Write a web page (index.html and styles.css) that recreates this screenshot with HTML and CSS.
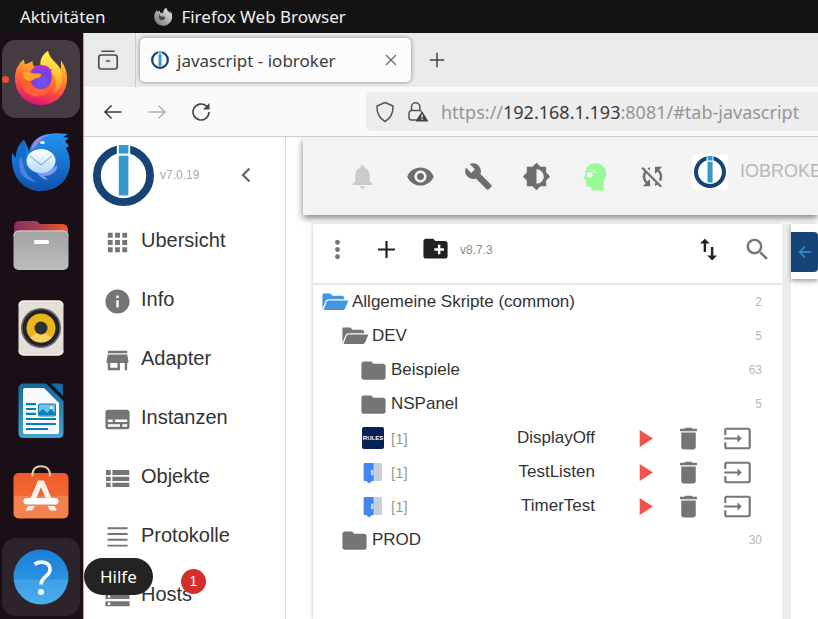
FILE: index.html
```html
<!DOCTYPE html>
<html lang="de">
<head>
<meta charset="utf-8">
<title>javascript - iobroker</title>
<link rel="stylesheet" href="styles.css">
</head>
<body>
<svg class="defs" aria-hidden="true">
  <defs>
    <linearGradient id="ffBody" x1="0.7" y1="0" x2="0.4" y2="1"><stop offset="0" stop-color="#ffe23a"/><stop offset="0.35" stop-color="#ffa02c"/><stop offset="0.65" stop-color="#ff5a36"/><stop offset="1" stop-color="#e0107c"/></linearGradient>
    <linearGradient id="ffFlame" x1="0" y1="0" x2="0" y2="1"><stop offset="0" stop-color="#fff252"/><stop offset="0.5" stop-color="#ffcf36"/><stop offset="1" stop-color="#ff7a2e"/></linearGradient>
    <radialGradient id="ffGlobe" cx="0.5" cy="0.7" r="0.7"><stop offset="0" stop-color="#6b57f5"/><stop offset="0.6" stop-color="#7a3fe0"/><stop offset="1" stop-color="#b833e1"/></radialGradient>
    <linearGradient id="tbBody" x1="0" y1="0" x2="0" y2="1"><stop offset="0" stop-color="#2394f3"/><stop offset="1" stop-color="#0d52ae"/></linearGradient>
    <linearGradient id="tbMail" x1="0" y1="0" x2="0" y2="1"><stop offset="0" stop-color="#ffffff"/><stop offset="1" stop-color="#b5dcfb"/></linearGradient>
    <linearGradient id="folderBack" x1="0" y1="0" x2="1" y2="0"><stop offset="0" stop-color="#84305a"/><stop offset="0.5" stop-color="#b5404a"/><stop offset="1" stop-color="#f15a24"/></linearGradient>
    <linearGradient id="folderFront" x1="0" y1="0" x2="0" y2="1"><stop offset="0" stop-color="#a3a3a3"/><stop offset="1" stop-color="#bcbcbc"/></linearGradient>
    <linearGradient id="writer" x1="0" y1="0" x2="0" y2="1"><stop offset="0" stop-color="#0f6a9e"/><stop offset="1" stop-color="#45a6d2"/></linearGradient>
    <linearGradient id="bag" x1="0" y1="0" x2="0" y2="1"><stop offset="0" stop-color="#f2592a"/><stop offset="1" stop-color="#f2763f"/></linearGradient>
    <linearGradient id="help" x1="0" y1="0" x2="0" y2="1"><stop offset="0" stop-color="#1b7fd9"/><stop offset="0.54" stop-color="#2b92e0"/><stop offset="0.55" stop-color="#3ea0e6"/><stop offset="1" stop-color="#4badea"/></linearGradient>
    <linearGradient id="grayFox" x1="1" y1="0" x2="0" y2="1"><stop offset="0" stop-color="#f0f0f0"/><stop offset="1" stop-color="#6c6c6c"/></linearGradient>
  </defs>
  <symbol id="logo" viewBox="0 0 61 61">
    <circle cx="30.5" cy="30.5" r="26.6" fill="#fff" stroke="#164477" stroke-width="7.8"/>
    <path d="M23.8 0h13.4v11H23.8z" fill="#fff"/>
    <path d="M25.8 0h9.6v8.6h-9.6zM25.8 10.800h9.6v39.800h-9.6z" fill="#3399cc"/>
  </symbol>
  <symbol id="folder" viewBox="0 0 24 24"><path d="M10 4H4c-1.100 0-1.990.9-1.990 2L2 18c0 1.100.9 2 2 2h16c1.100 0 2-.9 2-2V8c0-1.100-.9-2-2-2h-8l-2-2z" transform="translate(0 .8) scale(1 .94)"/></symbol>
  <symbol id="folder-open" viewBox="0 0 24 24"><path d="M3 4.600h5.500l2 1.800H18c1.200 0 2 .7 2 2v1H7.500c-1.600 0-2.500.6-3 1.800L2 17.200V5.800C2 5.100 2.300 4.600 3 4.600z"/><path d="M7.500 10.300h16l-2.600 6.400c-.5 1-1.100 1.500-2.100 1.500H2.900l2.500-6.600C5.800 10.700 6.500 10.300 7.500 10.300z"/></symbol>
  <symbol id="play" viewBox="0 0 24 24"><path d="M8 5v14l11-7z"/></symbol>
  <symbol id="trash" viewBox="0 0 24 24"><path d="M6 19c0 1.100.9 2 2 2h8c1.100 0 2-.9 2-2V7H6v12zM19 4h-3.500l-1-1h-5l-1 1H5v2h14V4z"/></symbol>
  <symbol id="export" viewBox="0 0 24 24"><path d="M21 3.010H3c-1.100 0-2 .9-2 2V9h1.800V4.800h18.400v14.400H2.800V15H1v4.010c0 1.100.9 1.980 2 1.980h18c1.100 0 2-.88 2-1.980v-14c0-1.110-.9-2-2-2zM12 15.500l3.500-3.500L12 8.500v2.700H1v1.600h11z"/></symbol>
  <symbol id="blockly" viewBox="0 0 24 24"><path d="M12.500 2.800H20q1 0 1 1v15.400q0 1-1 1h-7.500z" fill="#c6cfdc"/><path d="M4.500 2.800h8.500v17.400h-1.500L8.800 22.600 6 20.200H4.500q-1 0-1-1V3.800q0-1 1-1z" fill="#4284f3"/><path d="M10.500 8.800l2.600 1.200v4l-2.600 1z" fill="#c6cfdc"/></symbol>
</svg>

<header class="topbar">
  <span>Aktivitäten</span>
  <span class="app-name">
    <svg width="20" height="20" viewBox="0 0 20 20"><path d="M1.200 9.500C1.200 7 2 5.500 3.200 4l.6-1.200.6 2 2.200-1.300.5 2 3 .6C9.800 3.800 11.500 1.500 13.500.7c.2 2 1.200 3 2.600 4l1.300 2V4c1.400 2 2 4 1.700 6.500-.5 5-4.500 8.300-9 8.300-5 0-9-4-8.900-9.300z" fill="url(#grayFox)"/><path d="M7 6.500q-1 2 1 3l3 0q2 2 0 3-3 2-5-1-1-3 1-5z" fill="#4a4a4a"/></svg>
    Firefox Web Browser
  </span>
</header>

<div class="desktop">
  <nav class="dock" aria-label="Dock">
    <button class="tile active" aria-label="Firefox">
      <svg width="56" height="56" viewBox="0 0 56 56">
        <path d="M2 28C2 22 3 17 6 14c1-3 3-4 5-5.500 0 2 .5 3.500 1 4.500 2 0 4-1 7.500-3 0 2 .5 4 1.500 5.500l7-1C27 9 30 3 35 0c1 5 4 8 8 12l5 6V9.500c4 6 6.500 12 6 19.500C53 44 42 54 28 54 14 54 2 43 2 28z" fill="url(#ffBody)"/>
        <path d="M28 15C26 9 30 3 35 0c1 6 4 9 8 13 9 9 8 24-3 30 4-6 4-14 0-20-3-4-7-6-12-8z" fill="url(#ffFlame)"/>
        <path d="M17 22c2-5 6-8 11-8 4 0 7 1 9 4l3 1-2 1c2 8 0 18-10 18-7 0-12-6-11-16z" fill="url(#ffGlobe)"/>
        <path d="M8 24c2-3 5-4 9-2 3 1 7 1 11 1 1 2-1 4-4 4-4 1-5 4-7 3 1 6 6 8 11 8 4 0 7-1 10-4-2 9-9 13-17 11C12 43 6 35 8 24z" fill="#ff5f34"/>
        <path d="M9 22c3-2 6-2 9 0 3 1 7 0 10 1 0 2-2 4-5 4-3 1-4 3-7 3-4-1-6-4-7-8z" fill="#ffa22b"/>
      </svg>
    </button>
    <button class="tile" aria-label="Thunderbird">
      <svg width="60" height="58" viewBox="0 0 60 58">
        <path d="M1 20l4 5C5 17 8 11 13 7c2 4 4 7 5 12C20 8 28 2 38 1c5-1 10-1 19 0l-5 3 6 1-4 3 4 5-3 2c3 5 4 10 4 15 0 16-12 28-29 28C11 58-1 42 1 20z" fill="url(#tbBody)"/>
        <path d="M20 17C22 6 31 1 42 1.500c-7 1-12 4-15 9-2 3-4 5-7 6.500z" fill="#9a86e2"/>
        <path d="M5 25c0-8 3-14 8-18 2 6 3 10 1 16-4 8-5 15-2 22-5-5-8-12-7-20z" fill="#126bcd"/>
        <path d="M10 23c-5 12 1 25 16 26-8-4-13-11-14-18z" fill="#6c8cf0" opacity=".7"/>
        <path d="M27 37c8 3 14 0 19-5 1 6-5 11-13 11l4 4c-6-1-10-5-14-11z" fill="#7f9cf2"/>
        <ellipse cx="30" cy="28" rx="14.500" ry="12" fill="url(#tbMail)"/>
        <path d="M19 23l11 9 11-9" stroke="#6f9dca" stroke-width="1" fill="none"/>
        <ellipse cx="31.500" cy="9.500" rx="2.300" ry="1.600" fill="#fff"/>
      </svg>
    </button>
    <button class="tile" aria-label="Dateien">
      <svg width="56" height="52" viewBox="0 0 56 52"><path d="M1 8q0-6 5-6h16q3 0 4 2l1 1h22q6 0 6 6v13H1z" fill="url(#folderBack)"/><rect x=".5" y="11.500" width="55" height="39.500" rx="5" fill="url(#folderFront)"/><path d="M1 17q0-5 5-5h44q5 0 5 5" fill="none" stroke="#d0d0d0"/><rect x="21" y="21" width="15" height="4" rx="1.500" fill="#fff"/></svg>
    </button>
    <button class="tile" aria-label="Rhythmbox">
      <svg width="46" height="56" viewBox="0 0 46 56"><rect x=".5" y=".5" width="45" height="55" rx="5" fill="#e4e0d8"/><path d="M1 5q0-4 5-4h34q5 0 5 4M1 51q0 4 5 4h34q5 0 5-4" fill="none" stroke="#fff"/><circle cx="23" cy="28" r="20" fill="#6b6764"/><circle cx="23" cy="28" r="18.500" fill="#22222c"/><circle cx="23" cy="28" r="14.500" fill="#e9b517"/><path d="M12 37.500a14.500 14.500 0 0 0 22 0L25 32h-4z" fill="#f9d25e"/><circle cx="23" cy="28" r="6.500" fill="#2d3032"/></svg>
    </button>
    <button class="tile" aria-label="LibreOffice Writer">
      <svg width="46" height="56" viewBox="0 0 46 56"><path d="M5 .5h23L45.500 18v32q0 5-5 5h-35q-5 0-5-5V6q0-5 4.500-5.500z" fill="url(#writer)"/><path d="M33 .5h9q3 0 3 3V13z" fill="#0d6fa7"/><path d="M7 5h19l15 15v29q0 2-2 2H7q-2 0-2-2V7q0-2 2-2z" fill="#fafafa"/><path d="M8 21.200h10M8 26h10M8 30.800h10M8 36h30M8 41h30M8 46h22" stroke="#087db8" stroke-width="2.200"/><rect x="20.500" y="21" width="17" height="12" rx="1" fill="#70c1ed" stroke="#087db8"/><path d="M21 32v-3l4-3 4 4 4-4 4 4v2z" fill="#087db8"/><circle cx="33.500" cy="24.500" r="1.500" fill="#fff"/></svg>
    </button>
    <button class="tile software" aria-label="Ubuntu Software">
      <svg width="56" height="54" viewBox="0 0 56 54"><rect x=".5" y="8" width="55" height="45.500" rx="5" fill="url(#bag)"/><path d="M1 31h54v17q0 5-5 5H6q-5 0-5-5z" fill="#f5824e"/><path d="M19.500 11.500C19 5 22 1.200 28 1.200S37.500 5 37 11.500" fill="none" stroke="#e9cfa0" stroke-width="2"/><path d="M25 15.500h6L40.500 38h-6L28 22l-6.500 16h-6zM15 41h7l-3 4.500h-6.500zM34.500 41h7l2.500 4.500h-7z" fill="#fff3ec"/><rect x="10.500" y="33" width="35" height="6.500" rx="3.200" fill="#fff"/></svg>
    </button>
    <button class="tile hover" aria-label="Hilfe">
      <svg width="56" height="56" viewBox="0 0 56 56"><circle cx="28" cy="28" r="27.500" fill="url(#help)"/><path d="M21.500 15.200c6-4 15.500-2 15.500 5 0 7.500-9 7.500-9 15.300" fill="none" stroke="#fff" stroke-width="3.600"/><circle cx="28" cy="43" r="3" fill="#fff"/></svg>
      <span class="tooltip" role="tooltip">Hilfe</span>
    </button>
  </nav>

  <div class="window">
    <div class="tabstrip">
      <button class="view-btn" aria-label="Tabs">
        <svg width="22" height="22" viewBox="0 0 22 22" fill="none" stroke="#4b4b4b" stroke-width="1.600" stroke-linecap="round"><path d="M5 2.200h12"/><rect x="1.800" y="6" width="18.400" height="14" rx="2.500"/><path d="M9.500 12h3"/></svg>
      </button>
      <div class="tab">
        <svg width="18" height="18"><use href="#logo"/></svg>
        <span>javascript - iobroker</span>
        <button class="tab-close" aria-label="Schließen"><svg width="12" height="12" viewBox="0 0 12 12"><path d="M1 1l10 10M11 1L1 11" stroke="#666" stroke-width="1.200"/></svg></button>
      </div>
      <button class="new-tab" aria-label="Neuer Tab"><svg width="16" height="16" viewBox="0 0 16 16"><path d="M8 .8v14.400M.8 8h14.400" stroke="#444" stroke-width="1.500"/></svg></button>
    </div>

    <div class="navbar">
      <button aria-label="Zurück"><svg width="20" height="16" viewBox="0 0 20 16" fill="none" stroke="#3d3d3d" stroke-width="1.600"><path d="M18.500 8H2M8.500 1.500L2 8l6.500 6.500"/></svg></button>
      <button aria-label="Vor"><svg width="20" height="16" viewBox="0 0 20 16" fill="none" stroke="#b3b3b3" stroke-width="1.500"><path d="M1.500 8H18M11.500 1.500L18 8l-6.500 6.500"/></svg></button>
      <button aria-label="Neu laden"><svg width="20" height="20" viewBox="0 0 20 20"><path d="M15.500 4.200A8 8 0 1 0 18 10" fill="none" stroke="#444" stroke-width="1.600"/><path d="M18.500 1v6.500H12z" fill="#444"/></svg></button>
      <div class="urlbar">
        <svg width="20" height="22" viewBox="0 0 20 22" fill="none" stroke="#555" stroke-width="1.500" stroke-linejoin="round"><path d="M10 1.500l8 3.500c.3 7-2 12-8 15.500C4 17 1.700 12 2 5z"/></svg>
        <svg width="22" height="22" viewBox="0 0 22 22"><path d="M10 19H4.500A2.500 2.500 0 0 1 2 16.500v-4.500A2.500 2.500 0 0 1 4.500 9.500h8q1.500 0 2 .8M4.500 9.500V6a4.200 4.200 0 0 1 8.400 0v3.500" fill="none" stroke="#555" stroke-width="1.500"/><path d="M15 10.800l5.700 9.200H9.300z" fill="#444" stroke="#444" stroke-linejoin="round"/><path d="M15 13.500v3.200M15 17.700v1.300" stroke="#eee" stroke-width="1.400"/></svg>
        <div class="url" role="textbox" contenteditable="true" spellcheck="false" aria-label="Adresse">https://<b>192.168.1.193</b>:8081/#tab-javascript</div>
      </div>
    </div>

    <div class="page">
      <aside class="sidebar">
        <div class="side-head">
          <svg width="61" height="61"><use href="#logo"/></svg>
          <span class="version">v7.0.19</span>
          <button class="collapse" aria-label="Menü einklappen"><svg width="12" height="16" viewBox="0 0 12 16"><path d="M9.500 1.500L3 8l6.500 6.500" fill="none" stroke="#6b6b6b" stroke-width="2.400"/></svg></button>
        </div>
        <a class="item" href="#"><svg viewBox="0 0 24 24"><path d="M4 8h4V4H4v4zm6 12h4v-4h-4v4zm-6 0h4v-4H4v4zm0-6h4v-4H4v4zm6 0h4v-4h-4v4zm6-10v4h4V4h-4zm-6 4h4V4h-4v4zm6 6h4v-4h-4v4zm0 6h4v-4h-4v4z"/></svg><span>Ubersicht</span></a>
        <a class="item" href="#"><svg viewBox="0 0 24 24"><path d="M12 2C6.480 2 2 6.480 2 12s4.480 10 10 10 10-4.480 10-10S17.520 2 12 2zm1 15h-2v-6h2v6zm0-8h-2V7h2v2z"/></svg><span>Info</span></a>
        <a class="item" href="#"><svg viewBox="0 0 24 24"><path d="M20 4H4v2h16V4zm1 10v-2l-1-5H4l-1 5v2h1v6h10v-6h4v6h2v-6h1zm-9 4H6v-4h6v4z"/></svg><span>Adapter</span></a>
        <a class="item" href="#"><svg viewBox="0 0 24 24"><path d="M20 4H4c-1.100 0-2 .9-2 2v12c0 1.100.9 2 2 2h16c1.100 0 2-.9 2-2V6c0-1.100-.9-2-2-2zM4 12h4v2H4v-2zm10 6H4v-2h10v2zm6 0h-4v-2h4v2zm0-4H10v-2h10v2z"/></svg><span>Instanzen</span></a>
        <a class="item" href="#"><svg viewBox="0 0 24 24"><path d="M2 14h4v-3.500H2V14zm0 5h4v-3.500H2V19zM2 9h4V5H2v4zm5.500 5H22v-3.500H7.500V14zm0 5H22v-3.500H7.500V19zM7.500 5v4H22V5H7.500z" transform="translate(.6 0) scale(.96 1)"/></svg><span>Objekte</span></a>
        <a class="item" href="#"><svg viewBox="0 0 24 24"><path d="M3 3.500h18v1.600H3zM3 8.300h18v1.600H3zM3 13.100h18v1.600H3zM3 17.900h18v1.600H3z" transform="translate(1 0) scale(.92 1)"/></svg><span>Protokolle</span></a>
        <a class="item" href="#"><svg viewBox="0 0 24 24"><path d="M2 20h20v-4H2v4zm2-3h2v2H4v-2zM2 4v4h20V4H2zm4 3H4V5h2v2zm-4 7h20v-4H2v4zm2-3h2v2H4v-2z"/></svg><span>Hosts</span><span class="badge">1</span></a>
      </aside>

      <main class="main">
        <div class="appbar">
          <button class="dim" aria-label="Benachrichtigungen"><svg viewBox="0 0 24 24"><path d="M12 22c1.100 0 2-.9 2-2h-4c0 1.100.89 2 2 2zm6-6v-5c0-3.070-1.640-5.640-4.500-6.320V4c0-.83-.67-1.500-1.500-1.500s-1.500.67-1.500 1.500v.68C7.630 5.360 6 7.920 6 11v5l-2 2v1h16v-1l-2-2z"/></svg></button>
          <button aria-label="Anzeige"><svg viewBox="0 0 24 24"><path d="M12 4.500C7 4.500 2.730 7.610 1 12c1.730 4.390 6 7.500 11 7.500s9.270-3.110 11-7.500c-1.730-4.390-6-7.500-11-7.500zM12 17c-2.760 0-5-2.240-5-5s2.240-5 5-5 5 2.240 5 5-2.240 5-5 5zm0-8c-1.660 0-3 1.340-3 3s1.340 3 3 3 3-1.340 3-3-1.340-3-3-3z"/></svg></button>
          <button aria-label="Einstellungen"><svg viewBox="0 0 24 24"><path d="M22.700 19l-9.100-9.100c.9-2.300.4-5-1.500-6.900-2-2-5-2.400-7.400-1.300L9 6 6 9 1.600 4.700C.4 7.100.9 10.100 2.900 12.100c1.900 1.900 4.600 2.400 6.900 1.500l9.100 9.100c.4.4 1 .4 1.400 0l2.300-2.300c.5-.4.5-1.100.1-1.400z"/></svg></button>
          <button aria-label="Farbschema"><svg viewBox="0 0 24 24"><path d="M20 15.310L23.310 12 20 8.690V4h-4.690L12 .69 8.690 4H4v4.690L.69 12 4 15.310V20h4.690L12 23.310 15.310 20H20v-4.690zM12 18V6c3.310 0 6 2.690 6 6s-2.690 6-6 6z"/></svg></button>
          <button class="expert" aria-label="Expertenmodus"><svg viewBox="0 0 24 24"><path d="M13 1c5 0 8.500 3.600 8.500 8.200 0 3.100-1 5.200-2 6.800v7.500H9.500V20.500H7q-2 0-2-2V14.500H3.800c-.8 0-1.100-.7-.7-1.300L4.500 10.500V9c0-4.600 3.500-8 8.500-8z"/><g fill="#f3f3f3"><circle cx="8" cy="10.500" r="2.500"/><circle cx="12" cy="7.500" r="1.400"/><circle cx="9.500" cy="6.500" r=".7"/></g></svg></button>
          <button aria-label="Synchronisation"><svg viewBox="0 0 24 24"><path d="M10 6.350V4.260c-.8.210-1.550.54-2.230.96l1.460 1.460c.25-.12.500-.24.770-.33zm-7.140-.94l2.360 2.360C4.450 8.990 4 10.440 4 12c0 2.210.91 4.200 2.360 5.640L4 20h6v-6l-2.240 2.240C6.680 15.150 6 13.660 6 12c0-1 .25-1.940.68-2.770l8.080 8.080c-.25.13-.5.250-.77.340v2.090c.8-.21 1.550-.54 2.230-.96l2.360 2.360 1.270-1.270L4.140 4.140 2.860 5.410zM20 4h-6v6l2.240-2.240C17.320 8.850 18 10.340 18 12c0 1-.25 1.940-.68 2.770l1.460 1.460C19.550 15.010 20 13.560 20 12c0-2.210-.91-4.200-2.360-5.640L20 4z"/></svg></button>
          <div class="host"><span class="host-logo"><svg><use href="#logo"/></svg></span><span>IOBROKER</span></div>
        </div>

        <div class="workspace">
          <section class="scripts">
            <div class="tools">
              <button class="muted" aria-label="Menü"><svg viewBox="0 0 24 24"><path d="M12 8c1.100 0 2-.9 2-2s-.9-2-2-2-2 .9-2 2 .9 2 2 2zm0 2c-1.100 0-2 .9-2 2s.9 2 2 2 2-.9 2-2-.9-2-2-2zm0 6c-1.100 0-2 .9-2 2s.9 2 2 2 2-.9 2-2-.9-2-2-2z"/></svg></button>
              <button aria-label="Neues Skript"><svg viewBox="0 0 24 24"><path d="M19 12.900h-6.100V19h-1.800v-6.100H5v-1.800h6.100V5h1.800v6.100H19v1.800z"/></svg></button>
              <button aria-label="Neuer Ordner"><svg viewBox="0 0 24 24"><path d="M20 5h-8l-2-2H4c-1.110 0-1.990.89-1.990 2L2 17.500c0 1.110.89 2 2 2h16c1.110 0 2-.89 2-2V7c0-1.110-.89-2-2-2zm-1 8h-3v3h-2v-3h-3v-2h3V8h2v3h3v2z"/></svg></button>
              <span class="build">v8.7.3</span>
              <button aria-label="Sortieren"><svg viewBox="0 0 24 24"><path d="M16 17.010V10h-2v7.010h-3L15 21l4-3.990h-3zM9 3L5 6.990h3V14h2V6.990h3L9 3z"/></svg></button>
              <button class="muted" aria-label="Suchen"><svg viewBox="0 0 24 24"><path d="M15.500 14h-.79l-.28-.27C15.410 12.590 16 11.110 16 9.500 16 5.910 13.090 3 9.500 3S3 5.910 3 9.500 5.910 16 9.500 16c1.610 0 3.090-.59 4.230-1.570l.27.28v.79l5 4.990L20.490 19l-4.990-5zm-6 0C7.010 14 5 11.990 5 9.500S7.010 5 9.500 5 14 7.010 14 9.500 11.990 14 9.500 14z"/></svg></button>
            </div>
            <ul class="tree">
              <li class="row common"><svg><use href="#folder-open"/></svg><span>Allgemeine Skripte (common)</span><span class="count">2</span></li>
              <li class="row level1"><svg><use href="#folder-open"/></svg><span>DEV</span><span class="count">5</span></li>
              <li class="row level2"><svg><use href="#folder"/></svg><span>Beispiele</span><span class="count">63</span></li>
              <li class="row level2"><svg><use href="#folder"/></svg><span>NSPanel</span><span class="count">5</span></li>
              <li class="row level2 script"><span class="rules">RULES</span><span class="inst">[1]</span><span class="name">DisplayOff</span><button class="start" aria-label="Start"><svg><use href="#play"/></svg></button><button aria-label="Löschen"><svg><use href="#trash"/></svg></button><button class="last" aria-label="Exportieren"><svg><use href="#export"/></svg></button></li>
              <li class="row level2 script"><svg class="kind"><use href="#blockly"/></svg><span class="inst">[1]</span><span class="name">TestListen</span><button class="start" aria-label="Start"><svg><use href="#play"/></svg></button><button aria-label="Löschen"><svg><use href="#trash"/></svg></button><button class="last" aria-label="Exportieren"><svg><use href="#export"/></svg></button></li>
              <li class="row level2 script"><svg class="kind"><use href="#blockly"/></svg><span class="inst">[1]</span><span class="name">TimerTest</span><button class="start" aria-label="Start"><svg><use href="#play"/></svg></button><button aria-label="Löschen"><svg><use href="#trash"/></svg></button><button class="last" aria-label="Exportieren"><svg><use href="#export"/></svg></button></li>
              <li class="row level1"><svg><use href="#folder"/></svg><span>PROD</span><span class="count">30</span></li>
            </ul>
          </section>
          <div class="splitter"></div>
          <section class="editor">
            <div class="editor-head"><button aria-label="Liste einklappen"><svg width="14" height="14" viewBox="0 0 14 14"><path d="M13 7H1.500M7 1.500L1.500 7 7 12.500" fill="none" stroke="#2b86bb" stroke-width="1.800"/></svg></button></div>
          </section>
        </div>
      </main>
    </div>
  </div>
</div>
</body>
</html>
```
FILE: styles.css
```css
* { box-sizing: border-box; }

body {
  margin: 0;
  height: 100vh;
  display: flex;
  flex-direction: column;
  overflow: hidden;
  background: #1a0f16;
  color: #333;
  font-family: "Noto Sans", sans-serif;
}

button {
  display: flex;
  align-items: center;
  justify-content: center;
  flex: none;
  padding: 0;
  border: 0;
  background: none;
  color: inherit;
  font: inherit;
}

svg { display: block; flex: none; }
.defs { position: absolute; width: 0; height: 0; }

/* Desktop panel */
.topbar {
  display: flex;
  align-items: center;
  gap: 48px;
  flex: none;
  height: 33px;
  padding-left: 20px;
  background: #131313;
  color: #f0f0f0;
  font-size: 17px;
  white-space: nowrap;
}
.app-name { display: flex; align-items: center; gap: 8px; }

.desktop { display: flex; flex: 1; min-height: 0; }

.dock {
  display: flex;
  flex-direction: column;
  gap: 5px;
  flex: none;
  width: 83px;
  padding: 7px 3px 0 2px;
}
.tile { position: relative; width: 78px; height: 78px; border-radius: 14px; }
.tile.active { background: #463b42; }
.tile.active::before {
  content: "";
  position: absolute;
  left: 0;
  width: 7px;
  height: 7px;
  border-radius: 50%;
  background: #e95420;
}
.tile.software { padding-bottom: 5px; }
.tile.hover { background: #2d242b; }
.tooltip {
  position: absolute;
  left: 82px;
  top: 20px;
  z-index: 5;
  padding: 0 16px;
  border-radius: 19px;
  background: #232323;
  color: #fff;
  font-size: 17px;
  line-height: 37px;
}

/* Browser window */
.window {
  display: flex;
  flex-direction: column;
  flex: 1;
  min-width: 0;
  border-left: 1px solid #aaa;
  background: #fff;
}
.tabstrip {
  display: flex;
  align-items: center;
  flex: none;
  height: 54px;
  background: #eaeaea;
}
.view-btn { width: 52px; height: 54px; padding-right: 3px; border-right: 1px solid #ccc; }
.tab {
  display: flex;
  align-items: center;
  gap: 8px;
  width: 271px;
  height: 44px;
  margin-left: 4px;
  padding: 0 14px 0 11px;
  border-radius: 5px;
  background: #fcfcfc;
  box-shadow: 0 0 4px rgba(0, 0, 0, 0.45);
  color: #3b3b3b;
  font-size: 17px;
  white-space: nowrap;
}
.tab-close { margin-left: auto; }
.new-tab { width: 52px; height: 44px; }

.navbar {
  display: flex;
  align-items: center;
  flex: none;
  height: 50px;
  padding-left: 7px;
  border-bottom: 1px solid #ccc;
  background: #fafafa;
}
.navbar > button { width: 44px; height: 40px; }
.urlbar {
  display: flex;
  align-items: center;
  gap: 12px;
  flex: 1;
  min-width: 0;
  height: 39px;
  margin-left: 143px;
  padding-left: 9px;
  border-radius: 5px 0 0 5px;
  background: #ededed;
}
.url {
  flex: 1;
  min-width: 0;
  overflow: hidden;
  color: #969696;
  font-size: 18px;
  white-space: nowrap;
}
.url b { color: #3b3b3b; font-weight: normal; }

/* ioBroker admin */
.page {
  display: flex;
  flex: 1;
  min-height: 0;
  font-family: "Liberation Sans", sans-serif;
}
.sidebar {
  flex: none;
  width: 202px;
  overflow: hidden;
  border-right: 1px solid #dcdcdc;
}
.side-head {
  display: flex;
  align-items: center;
  height: 76px;
  padding: 0 33px 0 9px;
}
.version { margin-left: 6px; color: #aaa; font-size: 12px; }
.collapse { margin-left: auto; }
.item {
  position: relative;
  display: flex;
  align-items: center;
  gap: 9px;
  height: 59px;
  padding: 0 0 1px 19px;
  color: #333;
  font-size: 20px;
  line-height: 24px;
  text-decoration: none;
}
.item svg { width: 29px; height: 29px; fill: #757575; }
.item span { padding-bottom: 4px; }
.item .badge {
  position: absolute;
  left: 97px;
  top: 2px;
  width: 25px;
  height: 25px;
  padding: 0;
  border-radius: 50%;
  background: #d32f2f;
  color: #fff;
  font-size: 14px;
  line-height: 25px;
  text-align: center;
}

.main { display: flex; flex-direction: column; flex: 1; min-width: 0; overflow: hidden; }
.appbar {
  display: flex;
  align-items: center;
  flex: none;
  height: 78px;
  margin-left: 17px;
  padding-left: 30px;
  background: #f3f3f3;
  box-shadow: 0 3px 7px rgba(0, 0, 0, 0.5);
  fill: #6e6e6e;
}
.appbar button { width: 58px; height: 58px; }
.appbar button svg { width: 29px; height: 29px; }
.appbar .dim { fill: #cbcbcb; }
.appbar .expert { fill: #96fa96; }
.host {
  display: flex;
  align-items: center;
  gap: 12px;
  padding: 0 0 9px 11px;
  color: #b8b8b8;
  font-size: 18px;
}
.host-logo { padding: 2px; border-radius: 4px; background: #fff; }
.host-logo svg { width: 32px; height: 32px; }

.workspace { display: flex; flex: 1; min-height: 0; margin: 9px 0 0 27px; }
.scripts {
  flex: none;
  width: 469px;
  background: #fff;
  box-shadow: 0 1px 4px rgba(0, 0, 0, 0.25);
}
.tools {
  display: flex;
  height: 61px;
  border-bottom: 2px solid #e6e6e6;
  fill: #222;
}
.tools button { width: 49px; height: 50px; }
.tools svg { width: 29px; height: 29px; }
.tools .muted { fill: #757575; }
.build { flex: 1; color: #8c8c8c; font-size: 12px; line-height: 52px; }

.tree { margin: 0; padding: 0; list-style: none; }
.row {
  display: flex;
  align-items: center;
  height: 34px;
  gap: 3px;
  padding: 0 20px 0 7px;
  color: #333;
  fill: #757575;
  font-size: 17px;
}
.row svg { width: 29px; height: 29px; }
.common { fill: #4596df; }
.level1 { padding-left: 27px; }
.level2 { padding-left: 46px; }
.count { margin-left: auto; color: #b8b8b8; font-size: 12px; }
.script { gap: 0; padding-right: 18px; }
.script .kind { width: 25px; height: 25px; margin: 0 3px 0 1px; }
.rules {
  width: 22px;
  margin: 0 4px 0 3px;
  border-radius: 2px;
  background: #052258;
  color: #fff;
  font-size: 6px;
  font-weight: bold;
  line-height: 22px;
  text-align: center;
}
.inst { padding-left: 3px; color: #999; font-size: 15px; }
.name { flex: 1; padding-right: 27px; text-align: right; }
.script button { width: 44px; height: 34px; }
.script .last { width: 54px; }
.start { fill: #ef5350; }

.splitter { flex: none; width: 9px; background: #eceeee; }
.editor { flex: 1; min-width: 0; background: #fff; }
.editor-head {
  height: 55px;
  padding-top: 8px;
  box-shadow: 0 2px 5px rgba(0, 0, 0, 0.4);
}
.editor-head button {
  width: 27px;
  height: 40px;
  border-radius: 0 4px 4px 0;
  background: #164477;
}
```
